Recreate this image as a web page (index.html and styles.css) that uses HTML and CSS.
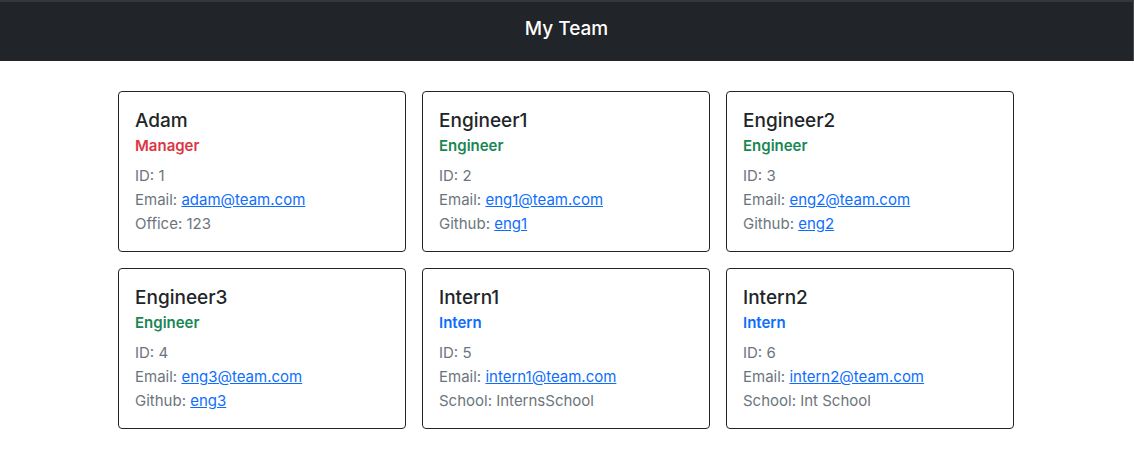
FILE: index.html
```html
<!DOCTYPE html>
<html lang="en">
<head>
<meta charset="utf-8">
<title>My Team</title>
<link rel="stylesheet" href="styles.css">
</head>
<body>
<header class="navbar"><h1 class="brand">My Team</h1></header>
<main class="team">
<article class="card">
<h2 class="name">Adam</h2>
<h3 class="role manager">Manager</h3>
<p class="info">ID: 1</p>
<p class="info">Email: <a href="mailto:adam@team.com">adam@team.com</a></p>
<p class="info">Office: 123</p>
</article>
<article class="card">
<h2 class="name">Engineer1</h2>
<h3 class="role engineer">Engineer</h3>
<p class="info">ID: 2</p>
<p class="info">Email: <a href="mailto:eng1@team.com">eng1@team.com</a></p>
<p class="info">Github: <a href="#eng1">eng1</a></p>
</article>
<article class="card">
<h2 class="name">Engineer2</h2>
<h3 class="role engineer">Engineer</h3>
<p class="info">ID: 3</p>
<p class="info">Email: <a href="mailto:eng2@team.com">eng2@team.com</a></p>
<p class="info">Github: <a href="#eng2">eng2</a></p>
</article>
<article class="card">
<h2 class="name">Engineer3</h2>
<h3 class="role engineer">Engineer</h3>
<p class="info">ID: 4</p>
<p class="info">Email: <a href="mailto:eng3@team.com">eng3@team.com</a></p>
<p class="info">Github: <a href="#eng3">eng3</a></p>
</article>
<article class="card">
<h2 class="name">Intern1</h2>
<h3 class="role intern">Intern</h3>
<p class="info">ID: 5</p>
<p class="info">Email: <a href="mailto:intern1@team.com">intern1@team.com</a></p>
<p class="info">School: InternsSchool</p>
</article>
<article class="card">
<h2 class="name">Intern2</h2>
<h3 class="role intern">Intern</h3>
<p class="info">ID: 6</p>
<p class="info">Email: <a href="mailto:intern2@team.com">intern2@team.com</a></p>
<p class="info">School: Int School</p>
</article>
</main>
</body>
</html>
```
FILE: styles.css
```css
* { box-sizing: border-box; }
body {
  margin: 0;
  background: #fff;
  color: #212529;
  font-family: Inter, "Liberation Sans", sans-serif;
  font-size: 15px;
  line-height: 24px;
}
h1, h2, h3, p { margin: 0; font-weight: 500; }
.navbar {
  padding: 13px 16px 18px;
  border-top: 2px solid #36373c;
  border-right: 1px solid #4a4b4d;
  background: #212529;
  text-align: center;
}
.brand { color: #fff; font-size: 19px; line-height: 28px; }
.team {
  display: grid;
  grid-template-columns: repeat(3, minmax(0, 288px));
  justify-content: center;
  gap: 16px;
  padding: 30px 17px 26px 15px;
}
.card {
  padding: 16px 16px 15px;
  border: 1px solid #212529;
  border-radius: 4px;
}
.name { font-size: 19px; line-height: 26px; }
.role { margin-bottom: 6px; font-size: 15px; font-weight: 600; line-height: 24px; }
.manager { color: #dc3545; }
.engineer { color: #198754; }
.intern { color: #0d6efd; }
.info { color: #6c757d; font-weight: 400; }
.info a { color: #0d6efd; }
```
